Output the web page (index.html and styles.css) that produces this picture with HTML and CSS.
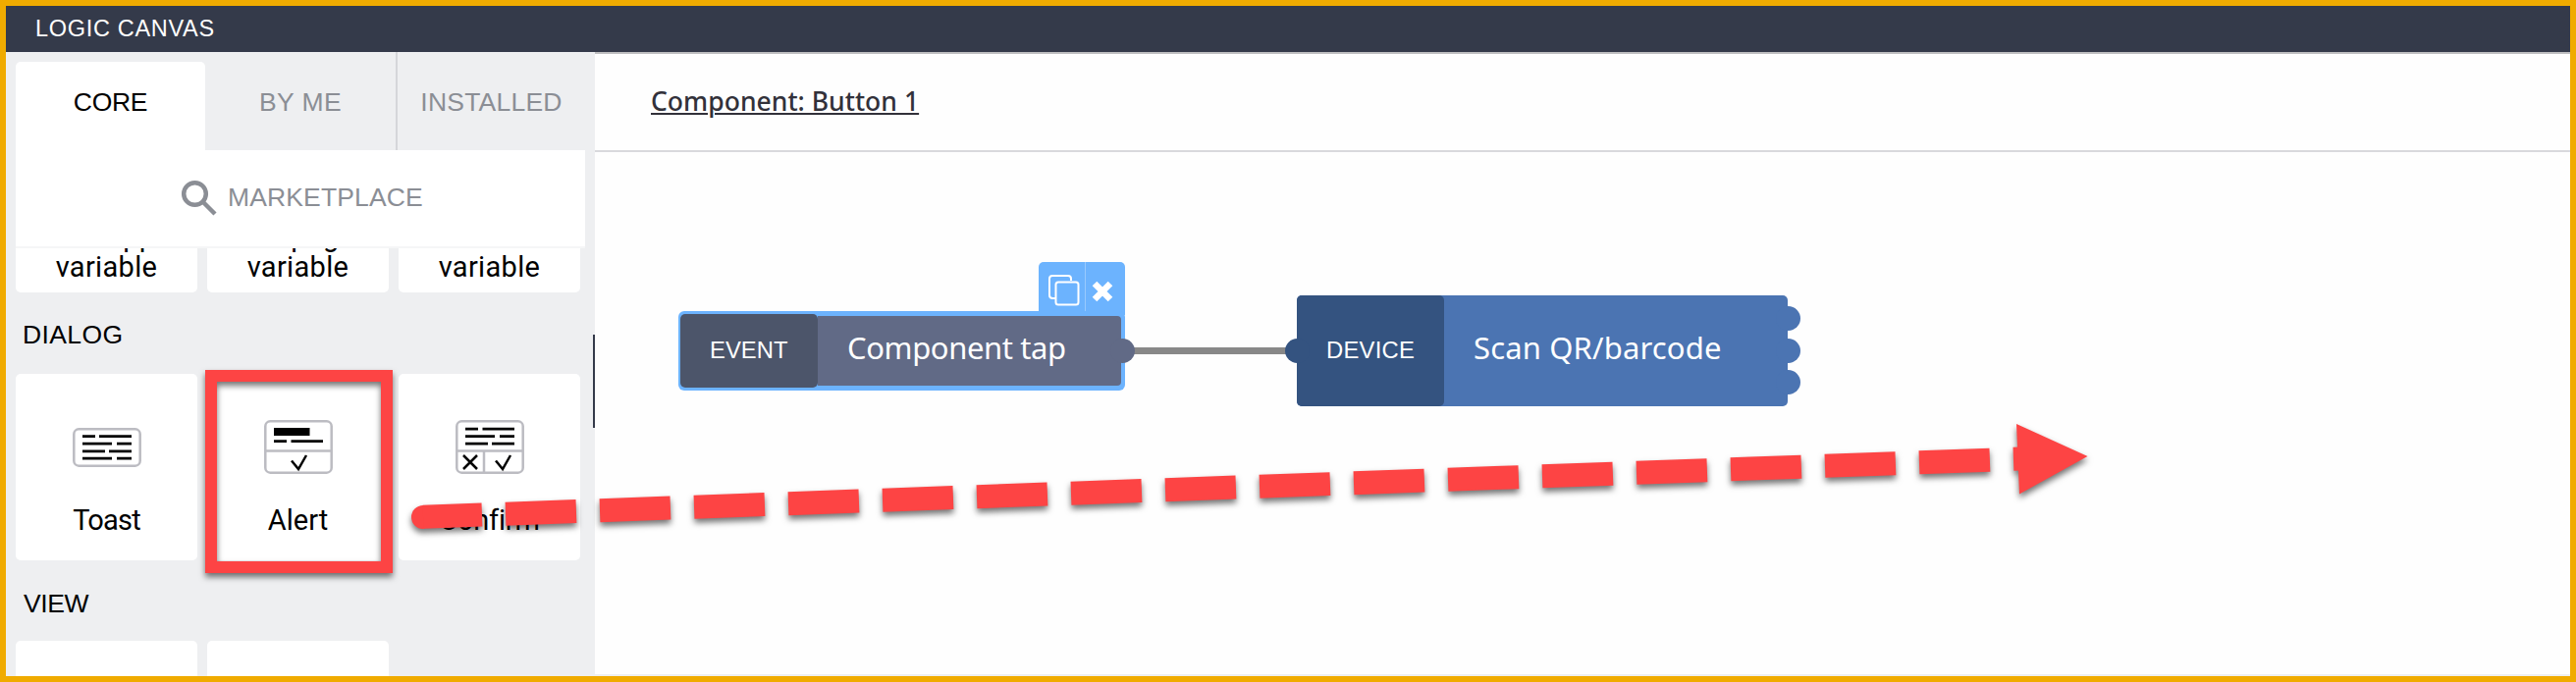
FILE: index.html
```html
<!DOCTYPE html>
<html lang="en">
<head>
<meta charset="utf-8">
<title>Logic Canvas</title>
<link rel="stylesheet" href="styles.css">
</head>
<body>
<div class="frame">
  <header class="header"><span class="caps t-title">LOGIC CANVAS</span></header>
  <div class="main">
    <aside class="sidebar">
      <nav class="tabs">
        <div class="tab tab-active"><span class="caps t-core">CORE</span></div>
        <div class="tab"><span class="caps t-byme">BY ME</span></div>
        <div class="tab tab-last"><span class="caps t-inst">INSTALLED</span></div>
      </nav>
      <div class="market">
        <svg class="search" width="38" height="38" viewBox="0 0 38 38"><circle cx="14.5" cy="14.5" r="11.3"/><path d="M23 23l12 12"/></svg>
        <span class="caps t-market">MARKETPLACE</span>
      </div>
      <div class="list">
        <div class="cards cards-cut">
          <div class="card"><span class="t-var">Set app<br>variable</span></div>
          <div class="card"><span class="t-var">Set page<br>variable</span></div>
          <div class="card"><span class="t-var">Set data<br>variable</span></div>
        </div>
        <h2 class="group group-dialog"><span class="caps t-dialog">DIALOG</span></h2>
        <div class="cards cards-full">
          <div class="card">
            <svg class="icon" width="72" height="58" viewBox="0 0 72 58">
              <rect class="box" x="2.3" y="10.3" width="67.4" height="37.4" rx="5"/>
              <path class="ink" d="M11 17.7h13m4 0h33M11 25.2h30m5 0h15M11 32.8h23m4 0h23M11 40.2h30m5 0h15"/>
            </svg>
            <span class="t-toast">Toast</span>
          </div>
          <div class="card">
            <svg class="icon" width="72" height="58" viewBox="0 0 72 58">
              <rect class="box" x="2.3" y="2.3" width="67.4" height="52.4" rx="5"/>
              <path class="box" d="M2 32.5h68"/>
              <path class="fill" d="M11 9h36.5v8H11z"/>
              <path class="ink" d="M11 22.7h13m4.5 0h32.5"/>
              <path class="mark" d="M29 42.5l7 8.5 8-14"/>
            </svg>
            <span class="t-alert">Alert</span>
          </div>
          <div class="card">
            <svg class="icon" width="72" height="58" viewBox="0 0 72 58">
              <rect class="box" x="2.3" y="2.3" width="67.4" height="52.4" rx="5"/>
              <path class="box" d="M2 32.5h68M30 32.5v22"/>
              <path class="ink" d="M11 10.2h13m4.5 0h32.5M11 17.7h30m5 0h15M11 25.2h23m4 0h23"/>
              <path class="mark" d="M9 37l14 14M23 37l-14 14M42 42.5l7 8.5 8-14"/>
            </svg>
            <span class="t-confirm">Confirm</span>
          </div>
        </div>
        <h2 class="group group-view"><span class="caps t-view">VIEW</span></h2>
        <div class="cards cards-next"><div class="card"></div><div class="card"></div></div>
      </div>
      <div class="scrollmark"></div>
    </aside>
    <section class="workspace">
      <div class="crumb"><span class="t-crumb">Component: Button 1</span></div>
      <div class="canvas">
        <div class="wire"></div>
        <div class="tools">
          <div class="tool tool-copy"><svg width="34" height="34" viewBox="0 0 34 34"><path d="M8 25H5.5Q2 25 2 22V5Q2 2 5 2H21Q24 2 24 5V7"/><rect x="8.5" y="8.5" width="23" height="23" rx="2.5"/></svg></div>
          <div class="tool tool-close"><svg width="24" height="24" viewBox="0 0 24 24"><path d="M4 4l16 16M20 4l-16 16"/></svg></div>
        </div>
        <div class="node node-event">
          <div class="kind"><span class="caps t-event">EVENT</span></div>
          <div class="label"><span class="t-tap">Component tap</span></div>
          <i class="port port-event"></i>
        </div>
        <div class="node node-device">
          <i class="port port-in"></i>
          <div class="kind"><span class="caps t-device">DEVICE</span></div>
          <div class="label"><span class="t-scan">Scan QR/barcode</span></div>
          <i class="port port-a"></i><i class="port port-b"></i><i class="port port-c"></i>
        </div>
      </div>
    </section>
  </div>
  <div class="callout"></div>
  <svg class="arrow" width="2624" height="695" viewBox="0 0 2624 695">
    <path class="cap" d="M431 515A12 12 0 0 0 431 539h1V515z"/>
    <path class="dash" d="M431 526.7L2057 467.6"/>
    <path class="cap" d="M2054 432L2126.5 465L2057 503.5z"/>
  </svg>
</div>
</body>
</html>
```
FILE: styles.css
```css
* { box-sizing: border-box; }
body { margin: 0; font-family: Roboto, "Liberation Sans", sans-serif; color: #000; }
.frame { position: relative; width: 2624px; height: 695px; border: 6px solid #f0ab00; background: #fff; display: flex; flex-direction: column; overflow: hidden; }
span { white-space: nowrap; }
.caps { font-family: "Liberation Sans", Arial, sans-serif; }
.header { height: 47px; flex: none; background: #343a4a; color: #fff; padding-left: 30px; display: flex; align-items: center; font-size: 23.5px; }
.main { display: flex; flex: 1; min-height: 0; }
.sidebar { position: relative; width: 600px; flex: none; background: #eeeff1; display: flex; flex-direction: column; padding: 0 10px; overflow: hidden; }
.tabs { display: flex; height: 100px; flex: none; font-size: 26.5px; color: #8b8e95; }
.tab { width: 193px; padding-top: 2px; display: flex; align-items: center; justify-content: center; }
.tab-active { margin-top: 10px; height: 90px; padding: 0 0 8px; background: #fff; color: #000; border-radius: 5px 5px 0 0; }
.tab + .tab { width: 194px; }
.tab.tab-last { border-left: 2px solid #d5d6da; width: 193px; }
.market { height: 100px; flex: none; background: #fff; border-bottom: 2px solid #f5f6f7; display: flex; align-items: center; padding-left: 168px; font-size: 26.5px; color: #8b8e95; }
.t-market { margin-top: -2px; }
.search { fill: none; stroke: #8b8e95; stroke-width: 4.5; margin-right: 10px; }
.list { flex: 1; min-height: 0; overflow: hidden; }
.cards { display: flex; gap: 10px; }
.card { width: 185px; background: #fff; border-radius: 5px; display: flex; flex-direction: column; align-items: center; text-align: center; font-size: 29px; }
.cards-cut { height: 45px; align-items: flex-end; }
.cards-cut .card { height: 190px; flex: none; justify-content: flex-end; padding-bottom: 10px; line-height: 31px; }
.cards-full .card { height: 190px; padding-top: 46px; }
.icon { display: block; margin-bottom: 28px; }
.box { fill: none; stroke: #bcbcc2; stroke-width: 2.5; }
.ink { fill: none; stroke: #000; stroke-width: 2.7; }
.mark { fill: none; stroke: #000; stroke-width: 2.5; }
.fill { fill: #000; }
.group { margin: 0; padding-left: 7px; height: 83px; font-size: 26.5px; font-weight: 400; line-height: 86px; }
.group-view { height: 82px; line-height: 87px; padding-left: 8px; }
.cards-next .card { height: 190px; }
.scrollmark { position: absolute; right: 0; top: 288px; width: 2px; height: 95px; background: #343a4a; }
.workspace { flex: 1; display: flex; flex-direction: column; border-top: 2px solid #bfbfc1; border-bottom: 2px solid #eeeff1; background: #fefefe; }
.crumb { height: 100px; flex: none; border-bottom: 2px solid #d9d9dd; padding: 0 0 3px 57px; display: flex; align-items: center; font-size: 26.5px; font-weight: 500; color: #32313a; }
.canvas { position: relative; flex: 1; }
.wire { position: absolute; left: 540px; top: 199px; width: 175px; height: 7px; background: #888; }
.tools { position: absolute; left: 452px; top: 112px; width: 88px; height: 54px; background: #6cb3fe; border-radius: 5px 5px 0 0; display: flex; }
.tool { padding: 12px 0 0 9px; }
.tool svg { display: block; fill: none; stroke: #fff; }
.tool-copy { width: 48px; height: 50px; border-right: 1px solid #98cafe; }
.tool-copy svg { stroke-width: 2; }
.tool-close { padding: 18px 0 0 5px; }
.tool-close svg { stroke-width: 6.5; }
.node { position: absolute; display: flex; color: #fff; border-radius: 5px; }
.kind { display: flex; align-items: center; padding: 0 0 2px 30px; border-radius: 5px; font-size: 23.8px; }
.label { display: flex; align-items: center; padding: 0 0 7px 30px; flex: 1; border-radius: 0 4px 4px 0; font-family: "Noto Sans", sans-serif; font-size: 31px; }
.node-event { left: 85px; top: 162px; width: 455px; height: 81px; background: #6cb3fe; padding: 3px 4px 3px 2px; border-radius: 6px; }
.node-event .kind { width: 140px; background: #4c556a; }
.node-event .label { background: #616a86; margin: 2px 0; }
.node-device { left: 715px; top: 146px; width: 500px; height: 113px; background: #4b74b2; }
.node-device .kind { width: 150px; background: #345380; }
.port { position: absolute; width: 25px; height: 25px; border-radius: 50%; background: #4b74b2; }
.port-event { right: -10px; top: 28px; background: #616a86; }
.port-in { left: -12px; top: 44px; background: #345380; }
.port-a { right: -13px; top: 11px; }
.port-b { right: -13px; top: 44px; }
.port-c { right: -13px; top: 76px; }
.callout { position: absolute; left: 203px; top: 371px; width: 191px; height: 207px; border: 12px solid #fd4444; filter: drop-shadow(0 4px 3px rgba(0,0,0,.55)); }
.arrow { position: absolute; left: -6px; top: -6px; filter: drop-shadow(0 4px 3px rgba(0,0,0,.55)); }
.cap { fill: #fd4444; }
.dash { fill: none; stroke: #fd4444; stroke-width: 24; stroke-dasharray: 72 24.06; stroke-dashoffset: 12; }

/* Tracking per label */
.t-title { letter-spacing: .69px; }
.t-core { letter-spacing: -.3px; }
.t-byme { letter-spacing: .43px; }
.t-inst { letter-spacing: .22px; }
.t-market { letter-spacing: .13px; }
.t-var { letter-spacing: .34px; }
.t-dialog { letter-spacing: .39px; }
.t-view { letter-spacing: -.4px; }
.t-toast { letter-spacing: -.8px; }
.t-confirm { letter-spacing: -.2px; }
.t-event { letter-spacing: .05px; }
.t-device { letter-spacing: .25px; }
.t-tap { letter-spacing: -.4px; }
.t-scan { letter-spacing: .15px; }
.t-crumb { font-family: "Noto Sans", sans-serif; letter-spacing: .03px; text-decoration: underline; text-decoration-thickness: 2px; text-underline-offset: 2px; }
```
